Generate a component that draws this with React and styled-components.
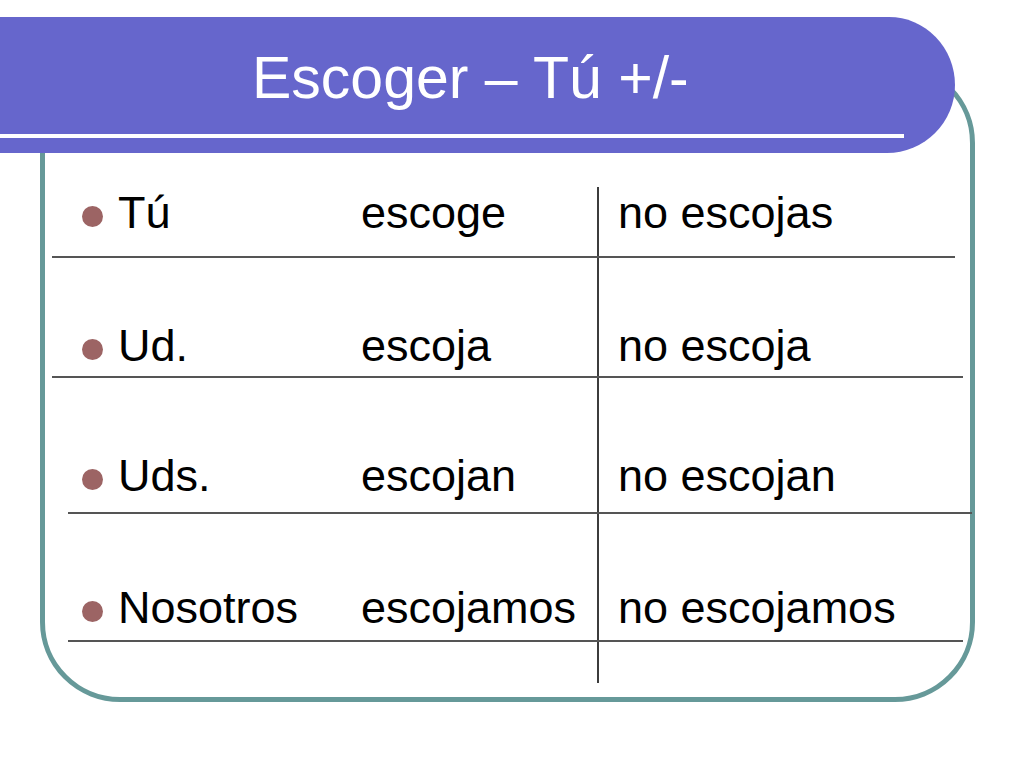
import styled, { createGlobalStyle } from 'styled-components';

const GlobalStyle = createGlobalStyle`
  html, body {
    margin: 0;
    padding: 0;
    background: #ffffff;
  }
  body {
    font-family: "Liberation Sans", Arial, sans-serif;
  }
`;

const Slide = styled.div`
  width: 1024px;
  height: 768px;
  overflow: hidden;
  background: #ffffff;
  display: flex;
  flex-direction: column;
`;

const Banner = styled.header`
  position: relative;
  z-index: 2;
  margin-top: 17px;
  width: 955px;
  height: 136px;
  box-sizing: border-box;
  padding-top: 32px;
  background: #6666cc;
  border-radius: 0 66px 68px 0 / 0 68px 68px 0;
`;

const Title = styled.h1`
  margin: 0 0 0 252px;
  font-family: "Liberation Sans", Arial, sans-serif;
  font-weight: normal;
  font-size: 59px;
  line-height: 59px;
  color: #ffffff;
  white-space: nowrap;
`;

const TitleRule = styled.div`
  margin-top: 26px;
  width: 904px;
  height: 4px;
  background: #ffffff;
`;

const Frame = styled.section`
  position: relative;
  z-index: 1;
  margin: -90px 0 0 40px;
  width: 935px;
  height: 639px;
  box-sizing: border-box;
  border: 5px solid #669999;
  border-radius: 80px;
  padding-top: 119px;
`;

// frame inner left edge sits at x = 45 on the page
const Row = styled.div`
  display: grid;
  grid-template-columns: ${p => 118 - p.$left}px 243px 236px 1fr;
  margin-left: ${p => p.$left - 45}px;
  margin-right: ${p => 970 - p.$right}px;
  height: ${p => p.$height}px;
  border-bottom: ${p => (p.$rule ? '2px solid #555555' : 'none')};
  font-size: 45px;
  line-height: 52px;
  color: #000000;
`;

const Cell = styled.div`
  display: flex;
  align-items: flex-end;
  padding-bottom: ${p => p.$pad}px;
  white-space: nowrap;
`;

const BulletCell = styled(Cell)`
  padding-left: ${p => p.$indent}px;
`;

const Bullet = styled.span`
  display: block;
  width: 21px;
  height: 21px;
  border-radius: 50%;
  background: #9c6464;
  margin-bottom: 12px;
`;

const NegCell = styled(Cell)`
  border-left: 2px solid #3c3c3c;
  padding-left: 19px;
`;

const rows = [
  { who: 'Tú', pos: 'escoge', neg: 'no escojas', left: 52, right: 955, height: 69, pad: 17 },
  { who: 'Ud.', pos: 'escoja', neg: 'no escoja', left: 52, right: 963, height: 118, pad: 4 },
  { who: 'Uds.', pos: 'escojan', neg: 'no escojan', left: 68, right: 972, height: 134, pad: 10 },
  { who: 'Nosotros', pos: 'escojamos', neg: 'no escojamos', left: 68, right: 963, height: 126, pad: 6 },
];

const App = () => {
  return (
    <>
      <GlobalStyle />
      <Slide>
        <Banner>
          <Title>Escoger – Tú +/-</Title>
          <TitleRule />
        </Banner>
        <Frame>
          {rows.map(r => (
            <Row key={r.who} $left={r.left} $right={r.right} $height={r.height} $rule>
              <BulletCell $pad={r.pad} $indent={82 - r.left}>
                <Bullet />
              </BulletCell>
              <Cell $pad={r.pad}>{r.who}</Cell>
              <Cell $pad={r.pad}>{r.pos}</Cell>
              <NegCell $pad={r.pad}>{r.neg}</NegCell>
            </Row>
          ))}
          <Row $left={68} $right={963} $height={41}>
            <div />
            <div />
            <div />
            <NegCell $pad={0} />
          </Row>
        </Frame>
      </Slide>
    </>
  );
};

export default App;
